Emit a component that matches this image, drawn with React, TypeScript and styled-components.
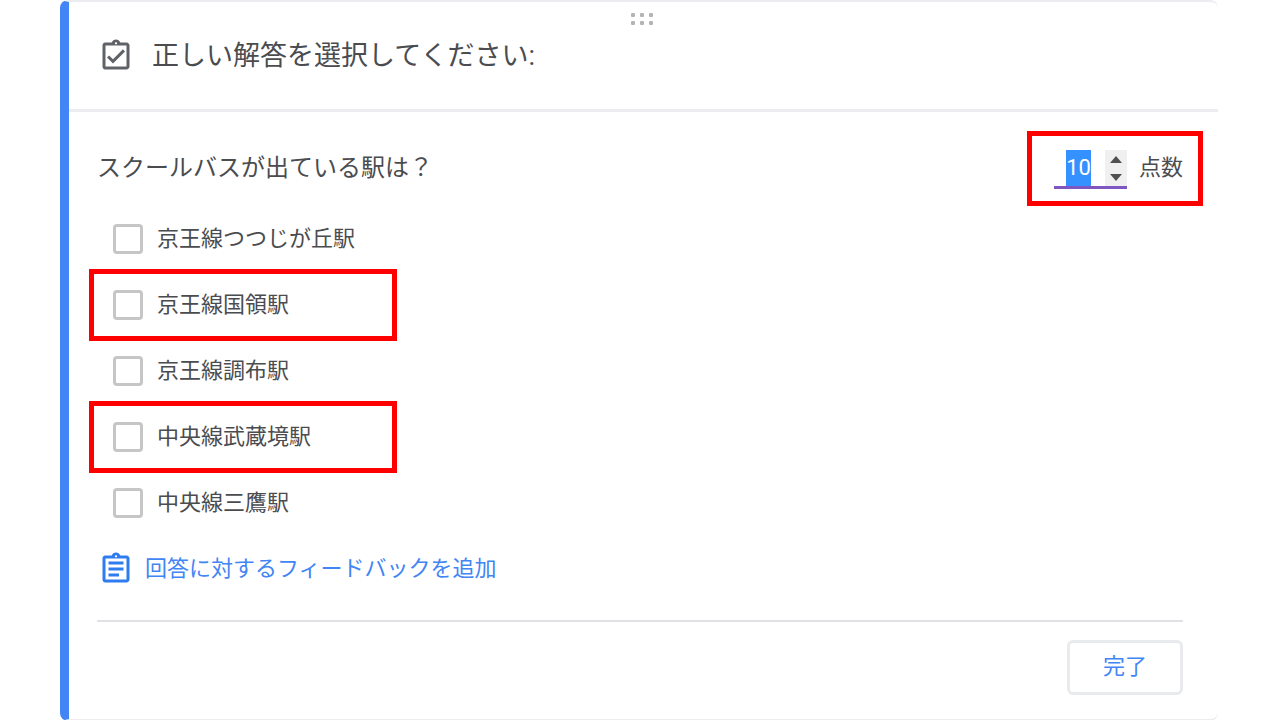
import { useEffect, useRef, useState } from "react";
import styled, { createGlobalStyle } from "styled-components";
import { MdOutlineAssignment, MdOutlineAssignmentTurnedIn } from "react-icons/md";

const GlobalStyle = createGlobalStyle`
  *, *::before, *::after { box-sizing: border-box; }
  body {
    margin: 0;
    background: #fff;
    color: #4a4c50;
    font-family: Roboto, "Noto Sans CJK JP", sans-serif;
  }
  button, input { font: inherit; }
`;

const Page = styled.main`
  padding: 0 62px 0 60px;
`;

const Card = styled.form`
  border: 2px solid #ededf1;
  border-left: 9px solid #4285f4;
  border-right: 0;
  border-radius: 8px;
  background: #fff;
`;

const Header = styled.header`
  display: flex;
  flex-direction: column;
  padding: 10px 33px 35px 29px;
  border-bottom: 3px solid #ececf1;
`;

const Grip = styled.svg`
  display: block;
  align-self: center;
  color: #b4b4b4;
`;

const TitleRow = styled.div`
  display: flex;
  align-items: center;
  gap: 18px;
  padding-top: 12px;

  svg {
    color: #5f6368;
  }
`;

const Title = styled.h1`
  margin: 0;
  font-size: 27px;
  line-height: 36px;
  font-weight: 400;
`;

const Body = styled.div`
  padding: 38px 35px 24px 28px;
`;

const QuestionRow = styled.div`
  display: flex;
  align-items: flex-start;
  justify-content: space-between;
`;

const Question = styled.h2`
  margin: 0;
  font-size: 24px;
  line-height: 36px;
  font-weight: 400;
`;

const Score = styled.div`
  position: relative;
  display: flex;
  align-items: flex-start;
  gap: 12px;
`;

const ScoreLabel = styled.label`
  font-size: 22px;
  line-height: 36px;
`;

const NumberField = styled.div`
  display: flex;
  border-bottom: 3px solid #7e57c2;
`;

const NumberInput = styled.input`
  width: 51px;
  height: 36px;
  padding: 0 14px 0 0;
  border: 0;
  outline: 0;
  background: transparent;
  color: #4a4c50;
  caret-color: transparent;
  font-size: 22px;
  line-height: 36px;
  text-align: right;
  appearance: textfield;

  &::-webkit-inner-spin-button,
  &::-webkit-outer-spin-button {
    appearance: none;
    margin: 0;
  }
  &::selection {
    background: rgba(51, 144, 255, 0.99);
    color: #fff;
  }
`;

const Spinner = styled.div`
  display: flex;
  flex-direction: column;
  width: 22px;
  background: #f0f0f0;
`;

const SpinButton = styled.button`
  display: flex;
  flex: 1;
  align-items: center;
  justify-content: center;
  padding: 0;
  border: 0;
  background: none;
  color: #505050;
`;

const Options = styled.ul`
  margin: 17px 0 0;
  padding: 0 0 0 16px;
  list-style: none;
`;

const Option = styled.li`
  position: relative;
  display: flex;
  align-items: center;
  height: 66px;
`;

const OptionLabel = styled.label`
  display: flex;
  align-items: center;
  gap: 14px;
  font-size: 22px;
  line-height: 32px;
`;

const Checkbox = styled.input`
  appearance: none;
  width: 30px;
  height: 30px;
  margin: 0;
  border: 3px solid #c6c6c6;
  border-radius: 4px;
  background: #fff;

  &:checked {
    border-color: #4285f4;
    background: #4285f4;
  }
`;

const Highlight = styled.span`
  position: absolute;
  border: 5px solid #ff0000;
  pointer-events: none;
`;

const OptionHighlight = styled(Highlight)`
  top: -3px;
  left: -24px;
  width: 308px;
  height: 72px;
`;

const ScoreHighlight = styled(Highlight)`
  inset: -19px -20px -17px -27px;
`;

const FeedbackButton = styled.button`
  display: flex;
  align-items: center;
  gap: 11px;
  margin-top: 15px;
  padding: 0 0 0 1px;
  border: 0;
  background: none;
  color: #4285f4;
  font-size: 22px;
  line-height: 32px;

  svg {
    color: #2f7cf0;
  }
`;

const Footer = styled.footer`
  display: flex;
  justify-content: flex-end;
  margin-top: 33px;
  padding-top: 18px;
  border-top: 2px solid #e0e0e5;
`;

const DoneButton = styled.button`
  padding: 7px 33px 9px;
  border: 3px solid #e9eaed;
  border-radius: 6px;
  background: #fff;
  color: #4285f4;
  font-size: 22px;
  line-height: 33px;
`;

const options = [
  { name: "京王線つつじが丘駅", highlighted: false },
  { name: "京王線国領駅", highlighted: true },
  { name: "京王線調布駅", highlighted: false },
  { name: "中央線武蔵境駅", highlighted: true },
  { name: "中央線三鷹駅", highlighted: false },
];

export default function App() {
  const [points, setPoints] = useState(10);
  const input = useRef<HTMLInputElement>(null);

  useEffect(() => {
    input.current?.focus();
    input.current?.select();
  }, []);

  return (
    <>
      <GlobalStyle />
      <Page>
        <Card onSubmit={(e) => e.preventDefault()}>
          <Header>
            <Grip width="24" height="14" viewBox="0 0 24 14" fill="currentColor" aria-hidden="true">
              {[1, 10, 19].map((x) => (
                <g key={x}>
                  <rect x={x} y="1" width="4" height="4" rx="1" />
                  <rect x={x} y="9" width="4" height="4" rx="1" />
                </g>
              ))}
            </Grip>
            <TitleRow>
              <MdOutlineAssignmentTurnedIn size={36} aria-hidden="true" />
              <Title>正しい解答を選択してください:</Title>
            </TitleRow>
          </Header>
          <Body>
            <QuestionRow>
              <Question>スクールバスが出ている駅は？</Question>
              <Score>
                <NumberField>
                  <NumberInput
                    ref={input}
                    id="points"
                    type="number"
                    min={0}
                    value={points}
                    onChange={(e) => setPoints(Number(e.target.value))}
                  />
                  <Spinner>
                    <SpinButton type="button" aria-label="増やす" onClick={() => setPoints(points + 1)}>
                      <svg width="12" height="7" viewBox="0 0 12 7" fill="currentColor">
                        <path d="M0 7 6 0l6 7z" />
                      </svg>
                    </SpinButton>
                    <SpinButton
                      type="button"
                      aria-label="減らす"
                      onClick={() => setPoints(Math.max(0, points - 1))}
                    >
                      <svg width="12" height="7" viewBox="0 0 12 7" fill="currentColor">
                        <path d="M0 0h12L6 7z" />
                      </svg>
                    </SpinButton>
                  </Spinner>
                </NumberField>
                <ScoreLabel htmlFor="points">点数</ScoreLabel>
                <ScoreHighlight />
              </Score>
            </QuestionRow>
            <Options>
              {options.map((option) => (
                <Option key={option.name}>
                  <OptionLabel>
                    <Checkbox type="checkbox" />
                    {option.name}
                  </OptionLabel>
                  {option.highlighted && <OptionHighlight />}
                </Option>
              ))}
            </Options>
            <FeedbackButton type="button">
              <MdOutlineAssignment size={36} aria-hidden="true" />
              回答に対するフィードバックを追加
            </FeedbackButton>
            <Footer>
              <DoneButton type="submit">完了</DoneButton>
            </Footer>
          </Body>
        </Card>
      </Page>
    </>
  );
}
